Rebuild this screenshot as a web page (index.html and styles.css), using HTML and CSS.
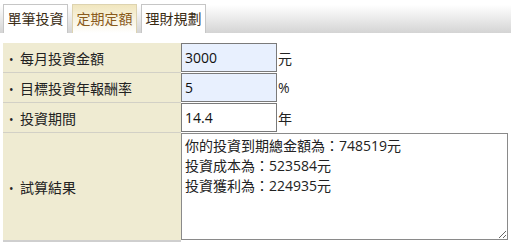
FILE: index.html
```html
<!DOCTYPE html>
<html>
<head>
  <meta charset="UTF-8">
  <link rel="stylesheet" href="styles.css">
</head>
<body>
  <div class="tabs">
    <div class="tab">單筆投資</div>
    <div class="tab active">定期定額</div>
    <div class="tab">理財規劃</div>
  </div>

  <table class="calc">
    <tr>
      <td class="label"><span class="dot">•</span>每月投資金額</td>
      <td class="field"><input type="text" class="num filled" value="3000"></td>
      <td class="unit">元</td>
    </tr>
    <tr>
      <td class="label"><span class="dot">•</span>目標投資年報酬率</td>
      <td class="field"><input type="text" class="num filled" value="5"></td>
      <td class="unit">%</td>
    </tr>
    <tr>
      <td class="label"><span class="dot">•</span>投資期間</td>
      <td class="field"><input type="text" class="num" value="14.4"></td>
      <td class="unit">年</td>
    </tr>
    <tr class="last">
      <td class="label"><span class="dot">•</span>試算結果</td>
      <td class="field" colspan="2"><textarea class="result">你的投資到期總金額為：748519元
投資成本為：523584元
投資獲利為：224935元</textarea></td>
    </tr>
  </table>
</body>
</html>
```

FILE: styles.css
```css
body {
  margin: 0;
  font-family: "Open Sans", "Noto Sans CJK TC", sans-serif;
  font-size: 14px;
  color: #222;
  background: #fff;
}

.tabs {
  display: flex;
  align-items: flex-end;
  gap: 4px;
  height: 33px;
  padding-left: 3px;
  background: linear-gradient(#ffffff 15%, #d4d4d4);
  box-sizing: border-box;
}

.tab {
  width: 65px;
  height: 29px;
  line-height: 27px;
  text-align: center;
  background: #fff;
  border: 1px solid #c6c6c6;
  border-bottom: none;
  box-sizing: border-box;
  color: #3a2c14;
}

.tab.active {
  background: linear-gradient(#f1e6be, #ffffff);
  border-color: #ddd3b0;
  color: #8a5b1c;
}

.calc {
  margin: 10px 0 0 3px;
  border-collapse: collapse;
  width: 507px;
}

.calc td {
  padding: 0;
  height: 29px;
}

.label {
  width: 178px;
  background: #efebd2;
  border-bottom: 1px solid #d2d0c6;
  color: #222;
  vertical-align: middle;
}

.dot {
  display: inline-block;
  width: 17px;
  padding-left: 6px;
  box-sizing: border-box;
  font-size: 12px;
}

.field {
  width: 95px;
  vertical-align: top;
}

.num {
  display: block;
  width: 96px;
  height: 29px;
  margin: 0;
  padding: 0 3px;
  border: 1px solid #7a7a7a;
  font-family: "Open Sans", "Noto Sans CJK TC", sans-serif;
  font-size: 14px;
  color: #111;
  background: #fff;
  box-sizing: border-box;
}

.num.filled {
  background: #e8f0fe;
}

.unit {
  padding-left: 1px !important;
  vertical-align: middle;
}

.last td {
  height: 107px;
}

.last .label {
  border-bottom: 2px solid #cfcfcf;
}

.result {
  display: block;
  width: 327px;
  height: 107px;
  margin: 0;
  padding: 2px 3px;
  border: 1px solid #8a8a8a;
  font-family: "Open Sans", "Noto Sans CJK TC", sans-serif;
  font-size: 14px;
  line-height: 20px;
  color: #222;
  box-sizing: border-box;
  resize: both;
}
```
